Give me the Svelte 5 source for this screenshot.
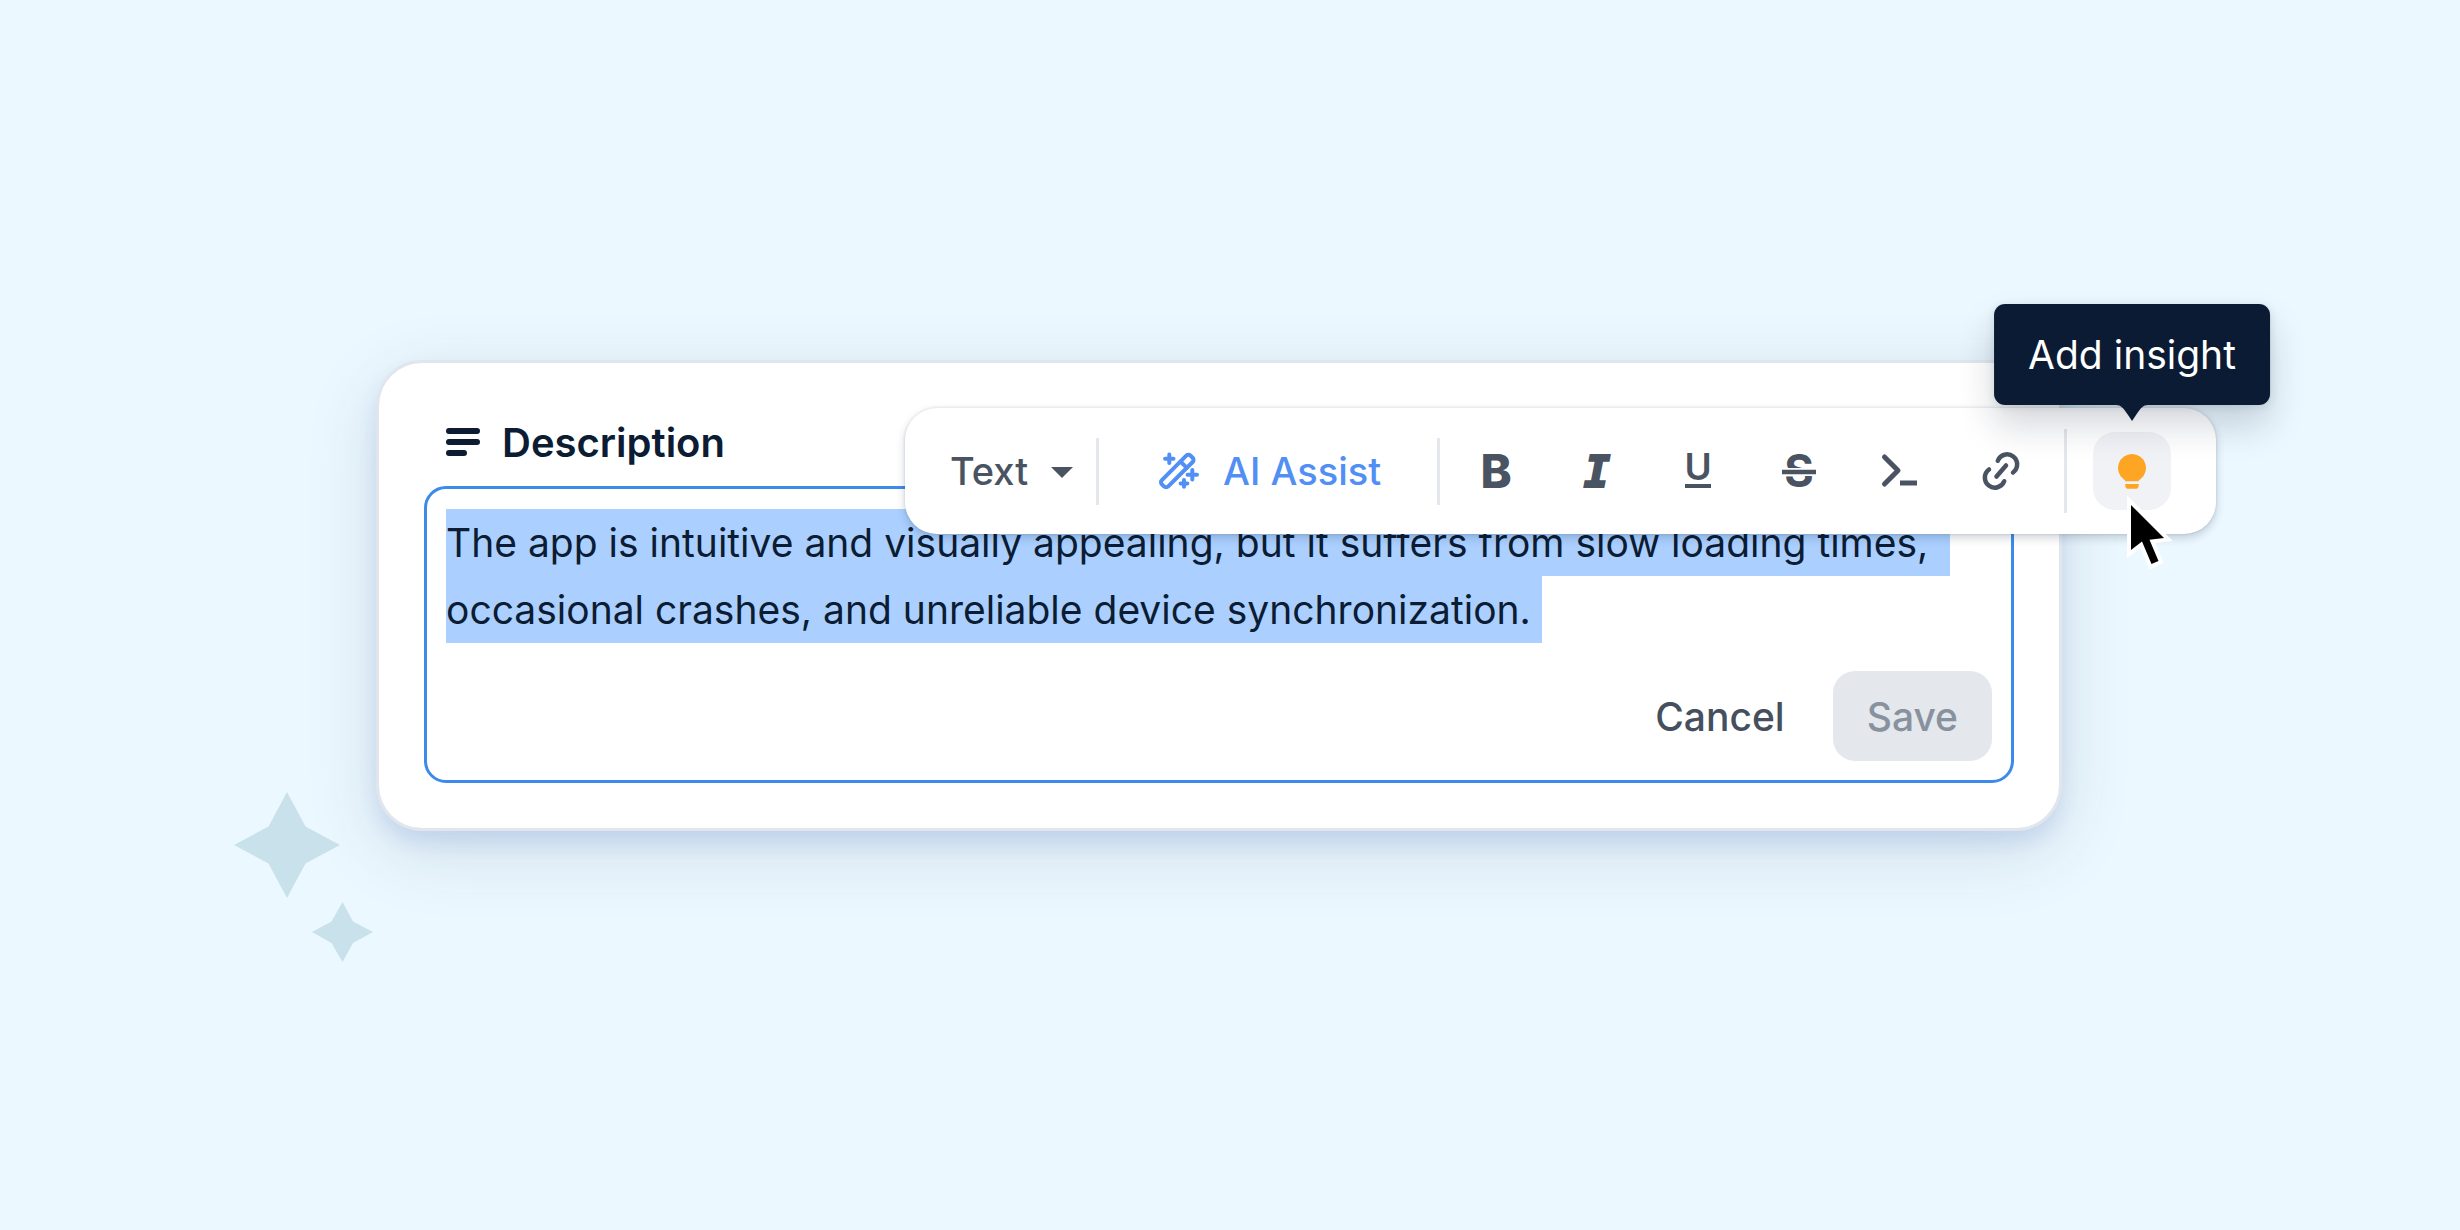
<script lang="ts">
	import { onMount } from 'svelte';

	let description = $state(
		'The app is intuitive and visually appealing, but it suffers from slow loading times, occasional crashes, and unreliable device synchronization. '
	);
	let blockStyle = $state('Text');
	let editor: HTMLTextAreaElement;

	const formats = ['Bold', 'Italic', 'Underline', 'Strikethrough', 'Code', 'Link'];

	onMount(() => {
		editor.focus();
		editor.select();
	});
</script>

<main class="stage">
	<section class="card">
		<div class="card-header">
			<svg class="lines-icon" viewBox="0 0 34 30" aria-hidden="true">
				<path d="M3 4h28M3 15h28M3 26h15" />
			</svg>
			<label for="description">Description</label>
		</div>

		<div class="editor">
			<textarea id="description" rows="2" spellcheck="false" bind:value={description} bind:this={editor}></textarea>
			<div class="actions">
				<button class="btn" type="button">Cancel</button>
				<button class="btn save" type="button" disabled>Save</button>
			</div>
		</div>

		<!-- Floating toolbar -->
		<div class="toolbar" role="toolbar" aria-label="Formatting">
			<div class="block-style">
				<select aria-label="Block style" bind:value={blockStyle}>
					<option>Text</option>
				</select>
				<svg class="caret" viewBox="0 0 22 11" aria-hidden="true"><path d="M0 0h22L11 11z" /></svg>
			</div>
			<span class="divider"></span>

			<button class="ai" type="button">
				<svg class="wand" viewBox="0 0 40 38" aria-hidden="true">
					<rect x="-2" y="14.5" width="40.5" height="9" rx="3" transform="rotate(-45 18.3 19)" />
					<path d="M21.5 9.5l6.3 6.3" />
					<path d="M10.3 2.5v8.4M6.1 6.7h8.4M33.3 18v9.4M28.6 22.7h9.4M25 28v6.8M21.6 31.4h6.8" />
				</svg>
				AI Assist
			</button>
			<span class="divider"></span>

			<div class="formats">
				{#each formats as format}
					<button class="format" type="button" aria-label={format}>
						<svg class="icon" viewBox="0 0 40 40" aria-hidden="true">
							{#if format === 'Bold'}
								<text class="bold" x="20" y="37">B</text>
							{:else if format === 'Italic'}
								<text class="italic" x="20" y="36">I</text>
							{:else if format === 'Underline'}
								<text class="underline" x="20" y="29">U</text>
								<path d="M7 35h26" stroke-width="4" />
							{:else if format === 'Strikethrough'}
								<text class="strike" x="20" y="36">S</text>
								<path class="gap" d="M3 21h34" />
								<path d="M3 21h34" stroke-width="4.5" />
							{:else if format === 'Code'}
								<path class="round" d="M4.5 6L18 19.500L4.500 33" stroke-width="5" />
								<path d="M20 32h17" stroke-width="5" />
							{:else}
								<path class="round" d="M16.8 9.8A10 10 0 1 1 32 21.5M23.2 30.2A10 10 0 1 1 8 18.5M15.5 25.5l9.5-11" stroke-width="4.5" />
							{/if}
						</svg>
					</button>
				{/each}
			</div>
			<span class="divider tall"></span>

			<div class="insight">
				<button class="insight-btn" type="button" aria-label="Add insight" aria-describedby="insight-tip">
					<svg class="bulb" viewBox="0 0 28 35" aria-hidden="true">
						<path d="M14 0a14 14 0 0 0-8.6 25c1.3 1 1.9 1.300 2 2.200h13.2c.1-.9.7-1.200 2-2.200A14 14 0 0 0 14 0z" />
						<path d="M7.3 30h13.4v1.4a3.4 3.4 0 0 1-3.4 3.4h-6.6a3.4 3.4 0 0 1-3.4-3.4z" />
					</svg>
				</button>
				<div class="tooltip" id="insight-tip" role="tooltip">
					Add insight
					<svg class="arrow" viewBox="0 0 32 16" aria-hidden="true">
						<path d="M0 0C6 0 8 4 16 16C24 4 26 0 32 0z" />
					</svg>
				</div>
				<svg class="cursor" viewBox="0 0 56 76" aria-hidden="true">
					<path d="M4 9L37 42L22.5 43.7L31.5 65L24.5 68L15 45.5L4 54z" />
				</svg>
			</div>
		</div>

		<!-- Sparkles -->
		<svg class="sparkles" viewBox="0 0 139 171" aria-hidden="true">
			<path d="M53 0L71.500 34.500L106 53L71.500 71.500L53 106L34.500 71.500L0 53L34.500 34.500z" />
			<path d="M108.500 110L119 129.500L139 140L119 151L108.500 170L97.500 151L78 140L97.500 129.500z" />
		</svg>
	</section>
</main>

<style>
	:global(body) {
		margin: 0;
		background: #ecf8ff;
	}

	.stage {
		box-sizing: border-box;
		min-height: 100vh;
		padding: 360px 398px 240px 376px;
		overflow: hidden;
		background: #ecf8ff;
		color: #0b1c33;
		font-family: Inter, 'Liberation Sans', sans-serif;
		font-size: 39px;
	}

	button,
	select,
	textarea {
		margin: 0;
		padding: 0;
		border: none;
		background: none;
		color: inherit;
		font: inherit;
	}

	button {
		cursor: pointer;
	}

	svg {
		display: block;
		flex: none;
	}

	.card {
		position: relative;
		padding: 45px;
		border: 3px solid #e1e6ec;
		border-radius: 46px;
		background: #fff;
		background-clip: padding-box;
		box-shadow: 0 12px 18px rgba(80, 120, 210, 0.14), 0 20px 72px rgba(20, 60, 90, 0.14);
	}

	.card-header {
		display: flex;
		align-items: center;
		gap: 22px;
		height: 68px;
		margin-bottom: 10px;
		padding-left: 22px;
		font-size: 40px;
		font-weight: 600;
	}

	.lines-icon {
		width: 34px;
		height: 30px;
		fill: none;
		stroke: #0b1c33;
		stroke-width: 6;
		stroke-linecap: round;
	}

	/* Editor */
	.editor {
		padding: 20px 19px 19px;
		border: 3px solid #3e8aeb;
		border-radius: 22px;
	}

	textarea {
		display: block;
		width: 100%;
		height: 134px;
		line-height: 67px;
		outline: none;
		overflow: hidden;
		resize: none;
	}

	textarea::selection {
		background: #abd0ff;
		color: #0b1c33;
	}

	.actions {
		display: flex;
		justify-content: flex-end;
		gap: 14px;
		margin-top: 28px;
	}

	.btn {
		height: 90px;
		padding: 0 34px;
		border-radius: 22px;
		color: #454f5e;
		font-weight: 500;
	}

	.save {
		background: #e4e7ec;
		color: #88929f;
	}

	/* Toolbar */
	.toolbar {
		position: absolute;
		top: 45px;
		right: -157px;
		display: flex;
		align-items: center;
		height: 126px;
		padding: 0 45px;
		border-radius: 32px;
		background: #fff;
		box-shadow: 0 0 3px rgba(20, 40, 70, 0.16), 0 4px 10px rgba(20, 40, 70, 0.2);
		color: #4a5361;
		font-size: 38px;
		font-weight: 500;
	}

	.block-style {
		position: relative;
		width: 146px;
	}

	select {
		width: 100%;
		height: 68px;
		appearance: none;
		cursor: pointer;
	}

	.caret {
		position: absolute;
		top: 30px;
		right: 23px;
		width: 22px;
		height: 11px;
		fill: #4a5361;
		pointer-events: none;
	}

	.divider {
		width: 3px;
		height: 67px;
		background: #e4e7eb;
	}

	.divider.tall {
		height: 84px;
	}

	.ai {
		display: flex;
		align-items: center;
		gap: 24px;
		width: 338px;
		height: 78px;
		padding-left: 60px;
		color: #528ff5;
	}

	.wand {
		width: 40px;
		height: 38px;
		fill: none;
		stroke: #528ff5;
		stroke-width: 4;
		stroke-linecap: round;
	}

	.formats {
		display: flex;
		padding: 0 13px 0 5px;
	}

	.format {
		display: grid;
		place-items: center;
		width: 101px;
		height: 78px;
	}

	.icon {
		width: 40px;
		height: 40px;
		overflow: visible;
		fill: none;
		stroke: #4a5361;
	}

	.icon text {
		fill: #4a5361;
		stroke: none;
		text-anchor: middle;
	}

	.bold {
		font-size: 47px;
		font-weight: 800;
	}

	.icon .italic {
		font-family: 'DejaVu Sans Mono', monospace;
		font-size: 44px;
		font-style: italic;
		font-weight: 700;
		stroke: #4a5361;
		stroke-width: 2;
	}

	.underline {
		font-size: 37px;
		font-weight: 600;
	}

	.strike {
		font-size: 45px;
		font-weight: 700;
	}

	.gap {
		stroke: #fff;
		stroke-width: 8;
	}

	.round {
		stroke-linecap: round;
		stroke-linejoin: round;
	}

	/* Insight */
	.insight {
		position: relative;
		margin-left: 26px;
	}

	.insight-btn {
		display: grid;
		place-items: center;
		width: 78px;
		height: 78px;
		border-radius: 22px;
		background: #f1f2f6;
	}

	.bulb {
		width: 28px;
		height: 35px;
		fill: #fea524;
	}

	.tooltip {
		position: absolute;
		bottom: calc(100% + 27px);
		left: 50%;
		padding: 0 34px;
		border-radius: 11px;
		background: #0a1b33;
		box-shadow: 0 20px 36px rgba(10, 27, 51, 0.18), 0 2px 8px rgba(10, 27, 51, 0.1);
		color: #fff;
		font-size: 39px;
		font-weight: 400;
		line-height: 101px;
		white-space: nowrap;
		transform: translateX(-50%);
	}

	.arrow {
		position: absolute;
		top: 100%;
		left: calc(50% - 16px);
		width: 32px;
		height: 16px;
		fill: #0a1b33;
	}

	.cursor {
		position: absolute;
		top: 64px;
		left: 34px;
		width: 56px;
		height: 76px;
		overflow: visible;
		fill: #000;
		stroke: #fff;
		stroke-width: 8;
		paint-order: stroke;
		pointer-events: none;
	}

	.sparkles {
		position: absolute;
		bottom: -135px;
		left: -145px;
		width: 139px;
		height: 171px;
		fill: #c8e1eb;
	}
</style>
